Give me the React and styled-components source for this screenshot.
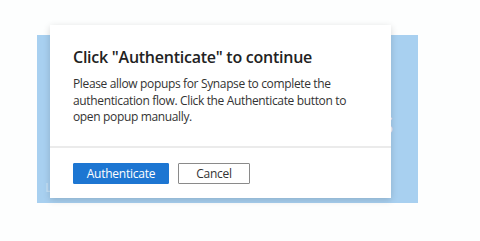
import React from 'react'
import styled, { createGlobalStyle } from 'styled-components'

const GlobalStyle = createGlobalStyle`
  html, body {
    margin: 0;
    padding: 0;
    background: #fdfefe;
  }
  body {
    font-family: "Open Sans", "Noto Sans", sans-serif;
    color: #252525;
  }
`

const Stage = styled.div`
  position: relative;
  width: 480px;
  height: 241px;
  padding: 35px 0 0 37px;
  box-sizing: border-box;
`

const Panel = styled.div`
  position: relative;
  width: 381px;
  height: 168px;
  background: #a8d0f0;
  overflow: hidden;
`

const GhostText = styled.span`
  position: absolute;
  color: rgba(255, 255, 255, ${(p) => p.alpha});
  font-size: ${(p) => p.size}px;
  font-weight: 600;
  line-height: 1;
`

const Dialog = styled.div`
  position: absolute;
  left: 50px;
  top: 25px;
  width: 341px;
  height: 173px;
  background: #ffffff;
  box-shadow: 0 2px 7px rgba(0, 0, 0, 0.16);
  display: flex;
  flex-direction: column;
`

const Body = styled.div`
  padding: 21px 0 0 23px;
  height: 121px;
  box-sizing: border-box;
`

const Title = styled.h2`
  margin: 0 0 8px;
  font-size: 16px;
  font-weight: 600;
  letter-spacing: -0.25px;
  color: #222222;
  line-height: 22px;
`

const Message = styled.p`
  margin: 0;
  width: 285px;
  font-size: 12px;
  letter-spacing: -0.35px;
  line-height: 16.5px;
  color: #333333;
`

const Divider = styled.div`
  height: 2px;
  background: #ebebeb;
`

const Footer = styled.div`
  display: flex;
  gap: 9px;
  padding: 15px 23px 0 23px;
`

const Button = styled.button`
  height: 21px;
  padding: 0;
  width: ${(p) => p.w}px;
  font-family: "Open Sans", "Noto Sans", sans-serif;
  font-size: 12px;
  letter-spacing: -0.25px;
  line-height: 1;
  border-radius: 1px;
  cursor: pointer;
  background: ${(p) => (p.primary ? '#1d76d2' : '#ffffff')};
  color: ${(p) => (p.primary ? '#ffffff' : '#333333')};
  border: 1px solid ${(p) => (p.primary ? '#1d76d2' : '#8a8a8a')};
`

const App = () => {
  return (
    <Stage>
      <GlobalStyle />
      <Panel>
        <GhostText alpha={0.85} size={24} style={{ left: 343, top: 78 }}>S</GhostText>
        <GhostText alpha={0.35} size={12} style={{ left: 8, top: 147 }}>L</GhostText>
      </Panel>
      <Dialog>
        <Body>
          <Title>Click "Authenticate" to continue</Title>
          <Message>
            Please allow popups for Synapse to complete the authentication flow. Click the
            Authenticate button to open popup manually.
          </Message>
        </Body>
        <Divider />
        <Footer>
          <Button primary w={96}>Authenticate</Button>
          <Button w={72}>Cancel</Button>
        </Footer>
      </Dialog>
    </Stage>
  )
}

export default App
